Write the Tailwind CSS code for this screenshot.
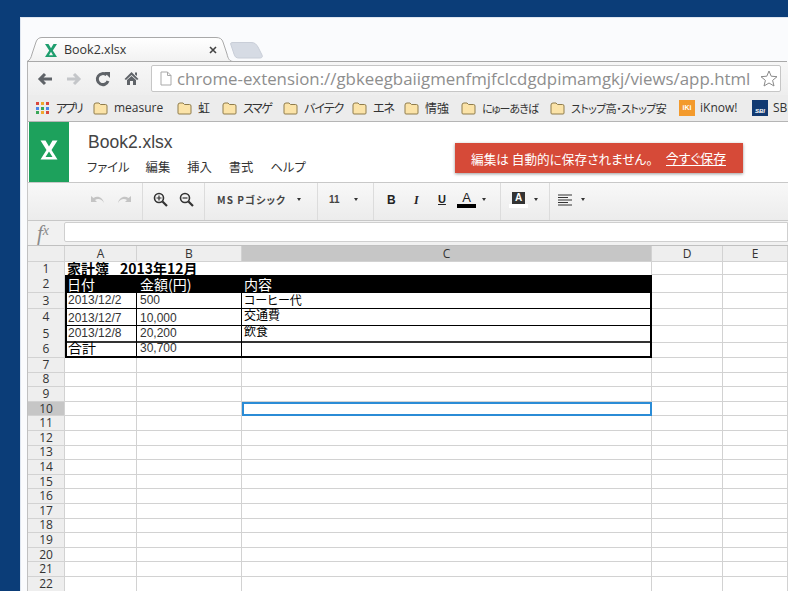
<!DOCTYPE html>
<html lang="ja">
<head>
<meta charset="utf-8">
<title>Book2.xlsx</title>
<script src="https://cdn.jsdelivr.net/npm/@tailwindcss/browser@4"></script>
</head>
<body class="w-[788px] h-[591px] overflow-hidden bg-[#0b3d78] pt-[17px] pl-[20px] font-['Noto_Sans_CJK_JP',sans-serif] [font-feature-settings:'palt']">
<div class="h-[574px] bg-[#fafbfd] pl-[6px] flex flex-col border-l border-t border-[#dfe6f0] overflow-hidden">

  <!-- tab strip -->
  <div class="relative h-[44px] shrink-0">
    <svg class="absolute left-0 top-0" width="760" height="45" viewBox="0 0 760 45">
      <path d="M205 43.5 H760" stroke="#a9a9a9" fill="none"/>
      <path d="M0 43.5 C3 42 4 40 5 36 L9 24 C10 21 12 19.5 15 19.5 H189 C193 19.5 195 21 196 24 L200 36 C201 41 203 43.5 206 43.5 Z" fill="url(#tabfill)" stroke="#a9a9a9"/>
      <path d="M206 24.5 H224 C228 24.5 229 26 231 29 L235 37 C236 39 235 40 232 40 H212 C209 40 208 39 207 36 L204 27 C203 25 204 24.5 206 24.5 Z" fill="#d6dbe4" stroke="#c9ced8"/>
      <defs><linearGradient id="tabfill" x1="0" y1="0" x2="0" y2="1"><stop offset="0" stop-color="#ffffff"/><stop offset="1" stop-color="#f2f2f2"/></linearGradient></defs>
    </svg>
    <div class="absolute left-[17px] top-[22px] w-[173px] h-[20px] flex items-center">
      <svg width="14" height="15" viewBox="0 0 14 15"><path d="M1 1 H4.5 L7 5.2 L9.5 1 H13 L8.8 7.5 L13 14 H1 L5.2 7.5 Z M5 12.2 H9 L7 8.8 Z" fill="#1f9e6e" fill-rule="evenodd"/></svg>
      <span class="ml-[6px] text-[12.5px] text-[#333] font-['Open_Sans',sans-serif]">Book2.xlsx</span>
      <svg class="ml-auto" width="8" height="8" viewBox="0 0 8 8"><path d="M1 1 L7 7 M7 1 L1 7" stroke="#444" stroke-width="1.6"/></svg>
    </div>
  </div>

  <!-- address bar -->
  <div class="h-[33px] shrink-0 border-l border-[#b5b5b5] bg-gradient-to-b from-[#f7f7f7] to-[#eeeeee] flex items-center pl-[9px]">
    <svg width="16" height="14" viewBox="0 0 16 14"><path d="M15 7 H4 M8 2 L3 7 L8 12" stroke="#5f6368" stroke-width="3" fill="none"/></svg>
    <svg class="ml-[13px]" width="16" height="14" viewBox="0 0 16 14"><path d="M1 7 H12 M8 2 L13 7 L8 12" stroke="#c4c6c9" stroke-width="3" fill="none"/></svg>
    <svg class="ml-[13px]" width="16" height="16" viewBox="0 0 16 16"><path d="M13 10 A5.5 5.5 0 1 1 11.5 4" stroke="#5f6368" stroke-width="3" fill="none"/><path d="M9 1 H15 V7 Z" fill="#5f6368"/></svg>
    <svg class="ml-[13px]" width="15" height="15" viewBox="0 0 15 15"><path d="M0.5 8 L7.5 1 L14.5 8 L13 9 L7.5 4 L2 9 Z M3 9 L7.5 5 L12 9 V14 H9 V10 H6 V14 H3 Z M11 1.5 H13 V5 L11 3.5 Z" fill="#5f6368"/></svg>
    <div class="ml-[12px] w-[630px] h-[27px] bg-white border border-[#c6c6c6] rounded-[2px] flex items-center pl-[8px] shrink-0">
      <svg width="12" height="15" viewBox="0 0 12 15"><path d="M1 1 H7.5 L11 4.5 V14 H1 Z M7.5 1 V4.5 H11" stroke="#a9a9a9" fill="#fff"/></svg>
      <span class="ml-[5px] text-[16.85px] text-[#8e8e8e] whitespace-nowrap font-['Open_Sans',sans-serif]">chrome-extension://gbkeegbaiigmenfmjfclcdgdpimamgkj/views/app.html</span>
      <svg class="ml-auto mr-[2px] shrink-0" width="18" height="17" viewBox="0 0 18 17"><path d="M9 1 L11.2 6.2 L17 6.7 L12.6 10.4 L14 16 L9 13 L4 16 L5.4 10.4 L1 6.7 L6.8 6.2 Z" stroke="#8a8a8a" fill="none"/></svg>
    </div>
  </div>

  <!-- bookmarks -->
  <div class="h-[27px] shrink-0 border-l border-b border-[#b5b5b5] bg-[#ececec] flex items-center pl-[8px] text-[12px] text-[#333] whitespace-nowrap">
    <div class="w-[57px] flex items-center gap-[7px] shrink-0">
      <div class="grid grid-cols-3 gap-[1.5px] w-[13px]">
        <i class="size-[3px] bg-[#d9473c]"></i><i class="size-[3px] bg-[#f0a92e]"></i><i class="size-[3px] bg-[#d9473c]"></i>
        <i class="size-[3px] bg-[#4a86e8]"></i><i class="size-[3px] bg-[#3aa757]"></i><i class="size-[3px] bg-[#4a86e8]"></i>
        <i class="size-[3px] bg-[#3aa757]"></i><i class="size-[3px] bg-[#f0a92e]"></i><i class="size-[3px] bg-[#d9473c]"></i>
      </div>
      <span class="tracking-[-2.2px]">アプリ</span>
    </div>
    <div class="w-[84px] flex items-center gap-[6px] shrink-0"><svg width="15" height="13" viewBox="0 0 15 13"><path d="M1 3 Q1 1 3 1 H6 L7.5 2.5 H12.5 Q14 2.5 14 4 V11 Q14 12 13 12 H2 Q1 12 1 11 Z" fill="#fbe3a8" stroke="#8f7c4c"/></svg><span class="font-['Open_Sans',sans-serif]">measure</span></div>
    <div class="w-[45px] flex items-center gap-[6px] shrink-0"><svg width="15" height="13" viewBox="0 0 15 13"><path d="M1 3 Q1 1 3 1 H6 L7.5 2.5 H12.5 Q14 2.5 14 4 V11 Q14 12 13 12 H2 Q1 12 1 11 Z" fill="#fbe3a8" stroke="#8f7c4c"/></svg><span>虹</span></div>
    <div class="w-[61px] flex items-center gap-[6px] shrink-0"><svg width="15" height="13" viewBox="0 0 15 13"><path d="M1 3 Q1 1 3 1 H6 L7.5 2.5 H12.5 Q14 2.5 14 4 V11 Q14 12 13 12 H2 Q1 12 1 11 Z" fill="#fbe3a8" stroke="#8f7c4c"/></svg><span class="tracking-[-1.5px]">スマゲ</span></div>
    <div class="w-[69px] flex items-center gap-[6px] shrink-0"><svg width="15" height="13" viewBox="0 0 15 13"><path d="M1 3 Q1 1 3 1 H6 L7.5 2.5 H12.5 Q14 2.5 14 4 V11 Q14 12 13 12 H2 Q1 12 1 11 Z" fill="#fbe3a8" stroke="#8f7c4c"/></svg><span class="tracking-[-1px]">バイテク</span></div>
    <div class="w-[52px] flex items-center gap-[6px] shrink-0"><svg width="15" height="13" viewBox="0 0 15 13"><path d="M1 3 Q1 1 3 1 H6 L7.5 2.5 H12.5 Q14 2.5 14 4 V11 Q14 12 13 12 H2 Q1 12 1 11 Z" fill="#fbe3a8" stroke="#8f7c4c"/></svg><span class="tracking-[-1px]">エネ</span></div>
    <div class="w-[57px] flex items-center gap-[6px] shrink-0"><svg width="15" height="13" viewBox="0 0 15 13"><path d="M1 3 Q1 1 3 1 H6 L7.5 2.5 H12.5 Q14 2.5 14 4 V11 Q14 12 13 12 H2 Q1 12 1 11 Z" fill="#fbe3a8" stroke="#8f7c4c"/></svg><span>情強</span></div>
    <div class="w-[89px] flex items-center gap-[6px] shrink-0"><svg width="15" height="13" viewBox="0 0 15 13"><path d="M1 3 Q1 1 3 1 H6 L7.5 2.5 H12.5 Q14 2.5 14 4 V11 Q14 12 13 12 H2 Q1 12 1 11 Z" fill="#fbe3a8" stroke="#8f7c4c"/></svg><span class="text-[11px] tracking-[-1px]">にゅーあきば</span></div>
    <div class="w-[129px] flex items-center gap-[6px] shrink-0"><svg width="15" height="13" viewBox="0 0 15 13"><path d="M1 3 Q1 1 3 1 H6 L7.5 2.5 H12.5 Q14 2.5 14 4 V11 Q14 12 13 12 H2 Q1 12 1 11 Z" fill="#fbe3a8" stroke="#8f7c4c"/></svg><span class="text-[11px] tracking-[-0.6px]">ストップ高・ストップ安</span></div>
    <div class="w-[73px] flex items-center gap-[5px] shrink-0"><div class="w-[16px] h-[16px] bg-[#f39a2c] text-white text-[7px] font-bold flex items-center justify-center font-['Liberation_Sans',sans-serif]">iKi</div><span class="font-['Open_Sans',sans-serif]">iKnow!</span></div>
    <div class="flex items-center gap-[5px] shrink-0"><div class="w-[16px] h-[16px] bg-[#123a72] text-white text-[6px] font-bold italic flex items-end justify-center font-['Liberation_Sans',sans-serif]">SBI</div><span class="font-['Open_Sans',sans-serif]">SBI</span></div>
  </div>

  <!-- app header -->
  <div class="h-[60px] shrink-0 bg-white flex pl-[1px] border-l border-[#b5b5b5]">
    <div class="w-[40px] bg-[#1da15c] flex items-center justify-center pb-[4px] pr-[1px] shrink-0">
      <svg width="18" height="20" viewBox="0 0 18 20"><path d="M0.5 0.5 H5.5 L9 6.5 L12.5 0.5 H17.5 L11.5 10 L17.5 19.5 H0.5 L6.5 10 Z M5.5 17 H12.5 L9 11.5 Z" fill="#fff" fill-rule="evenodd"/></svg>
    </div>
    <div class="pl-[19px] pt-[10px] shrink-0">
      <div class="text-[17.5px] leading-[21px] text-[#444] font-['Liberation_Sans',sans-serif]">Book2.xlsx</div>
      <div class="flex gap-[17px] mt-[5px] -ml-[1px] text-[12.3px] leading-[18px] text-[#333]"><span class="-mr-[1px]">ファイル</span><span>編集</span><span>挿入</span><span>書式</span><span>ヘルプ</span></div>
    </div>
    <div class="ml-auto mr-[45px] mt-[21px] w-[288px] h-[30px] bg-[#d64a38] shadow-[0_1px_3px_rgba(0,0,0,0.4)] flex items-center pl-[16px] text-[12.65px] text-white shrink-0">
      <span>編集は 自動的に保存されません。</span><span class="ml-[13px] text-[13px] border-b border-white leading-[15px]">今すぐ保存</span>
    </div>
  </div>

  <!-- toolbar -->
  <div class="h-[39px] shrink-0 flex border-l border-b border-t border-[#c8c8c8] bg-gradient-to-b from-[#f8f8f8] to-[#ececec] text-[#333] *:pb-[4px]">
    <div class="w-[115px] shrink-0 border-r border-[#dcdcdc] flex items-center pl-[62px] gap-[10px]">
      <svg width="16" height="10" viewBox="0 0 16 10"><path d="M1 1 V7 H7 L5 5 C8 3 12 4 14 8 C13 3 8 0 3.5 3 Z" fill="#c4c4c4"/></svg>
      <svg width="16" height="10" viewBox="0 0 16 10"><path d="M15 1 V7 H9 L11 5 C8 3 4 4 2 8 C3 3 8 0 12.5 3 Z" fill="#c4c4c4"/></svg>
    </div>
    <div class="w-[62px] shrink-0 border-r border-[#dcdcdc] flex items-center pl-[10px] gap-[11px]">
      <svg width="15" height="15" viewBox="0 0 15 15"><circle cx="6" cy="6" r="4.5" stroke="#333" stroke-width="1.6" fill="none"/><path d="M9.5 9.5 L14 14" stroke="#333" stroke-width="2.2"/><path d="M3.5 6 H8.5 M6 3.5 V8.5" stroke="#333" stroke-width="1.2"/></svg>
      <svg width="15" height="15" viewBox="0 0 15 15"><circle cx="6" cy="6" r="4.5" stroke="#333" stroke-width="1.6" fill="none"/><path d="M9.5 9.5 L14 14" stroke="#333" stroke-width="2.2"/><path d="M3.5 6 H8.5" stroke="#333" stroke-width="1.2"/></svg>
    </div>
    <div class="w-[113px] shrink-0 border-r border-[#dcdcdc] flex items-center pl-[12px] text-[10px] font-bold tracking-[1.1px] text-[#444] whitespace-nowrap">
      <span>MS Pゴシック</span>
      <i class="ml-[11px] border-x-[2.5px] border-t-[3px] border-x-transparent border-t-[#333]"></i>
    </div>
    <div class="w-[56px] shrink-0 border-r border-[#dcdcdc] flex items-center pl-[11px] text-[10px] font-bold text-[#444] font-['Liberation_Sans',sans-serif]">
      <span>11</span>
      <i class="ml-[14px] border-x-[2.5px] border-t-[3px] border-x-transparent border-t-[#333]"></i>
    </div>
    <div class="w-[127px] shrink-0 border-r border-[#dcdcdc] flex items-center pl-[13px] text-[#222] font-['Liberation_Sans',sans-serif]">
      <span class="w-[27px] text-[12px] font-black">B</span>
      <span class="w-[24px] text-[12px] font-bold italic font-['Liberation_Serif',serif]">I</span>
      <span class="w-[19px] text-[11px] font-bold underline">U</span>
      <span class="w-[19px] text-[13px] leading-[13px] border-b-[4px] border-black text-center">A</span>
      <i class="ml-[6px] border-x-[2.5px] border-t-[3px] border-x-transparent border-t-[#333]"></i>
    </div>
    <div class="w-[49px] shrink-0 border-r border-[#dcdcdc] flex items-center pl-[8px]">
      <span class="w-[19px] flex flex-col items-center">
        <span class="w-[13px] h-[12px] bg-[#333] text-white text-[10px] leading-[12px] font-bold text-center font-['Liberation_Sans',sans-serif]">A</span>
        <span class="w-[19px] h-[4px] bg-white"></span>
      </span>
      <i class="ml-[6px] border-x-[2.5px] border-t-[3px] border-x-transparent border-t-[#333]"></i>
    </div>
    <div class="flex-1 flex items-center pl-[8px]">
      <svg width="14" height="12" viewBox="0 0 14 12"><path d="M0 1 H14 M0 3.5 H10 M0 6 H14 M0 8.5 H10 M0 11 H14" stroke="#333"/></svg>
      <i class="ml-[9px] border-x-[2.5px] border-t-[3px] border-x-transparent border-t-[#333]"></i>
    </div>
  </div>

  <!-- formula bar -->
  <div class="h-[24px] shrink-0 border-l border-[#c8c8c8] bg-[#f1f1f1] flex items-start">
    <div class="w-[36px] shrink-0 pl-[9px] text-[21px] leading-[24px] italic text-[#8a8a8a] font-['Liberation_Serif',serif]">f<span class="relative -top-[5px] text-[14px]">x</span></div>
    <div class="flex-1 h-[20px] mt-[1px] bg-white border border-[#cfcfcf] rounded-l-[2px]"></div>
  </div>

  <!-- sheet -->
  <div class="border-l border-t border-[#c0c0c0] bg-white text-[12px] leading-none whitespace-nowrap">
    <div class="h-[16px] grid grid-cols-[37px_72px_105px_410px_71px_65px] bg-[#eeeeee] text-[#333] font-['Open_Sans',sans-serif] *:flex *:items-center *:justify-center *:border-r *:border-b *:border-[#d2d2d2]">
      <div></div><div>A</div><div>B</div><div class="bg-[#c6c6c6]">C</div><div>D</div><div>E</div>
    </div>
    <div class="h-[13px] grid grid-cols-[37px_72px_105px_410px_71px_65px] *:border-r *:border-[#d2d2d2]">
      <div class="bg-[#eeeeee] flex items-center justify-center text-[#333] font-['Open_Sans',sans-serif]">1</div><div class="pl-[2px] font-bold text-[14px] leading-[13px] text-black border-r-0!">家計簿<span class="ml-[11px]">2013年12月</span></div><div class="border-r-0!"></div><div></div><div class="border-b"></div><div class="border-b"></div>
    </div>
    <div class="h-[18px] grid grid-cols-[37px_72px_105px_410px_71px_65px] *:border-r *:border-[#d2d2d2]">
      <div class="bg-[#eeeeee] border-b flex items-center justify-center text-[#333] font-['Open_Sans',sans-serif]">2</div><div class="bg-black text-white text-[14px] pl-[2px] flex items-center border-r-0!">日付</div><div class="bg-black text-white text-[14px] pl-[3px] flex items-center border-r-0!">金額(円)</div><div class="bg-black text-white text-[14px] pl-[2px] flex items-center border-r-0!">内容</div><div class="border-b"></div><div class="border-b"></div>
    </div>
    <div class="h-[16px] grid grid-cols-[37px_72px_105px_410px_71px_65px] *:border-r *:border-b *:border-[#d2d2d2]">
      <div class="bg-[#eeeeee] flex items-center justify-center text-[#333] font-['Open_Sans',sans-serif]">3</div><div class="border-l-2 border-l-black! border-r-black! border-b-black! pl-[1px] pb-[2px] flex items-center text-[#333] font-['Liberation_Sans',sans-serif]">2013/12/2</div><div class="border-r-black! border-b-black! pl-[3px] pb-[2px] flex items-center text-[#333] font-['Liberation_Sans',sans-serif]">500</div><div class="border-r-2! border-r-black! border-b-black! pl-[2px] pb-[2px] flex items-center text-black">コーヒー代</div><div></div><div></div>
    </div>
    <div class="h-[16px] grid grid-cols-[37px_72px_105px_410px_71px_65px] *:border-r *:border-b *:border-[#d2d2d2]">
      <div class="bg-[#eeeeee] flex items-center justify-center text-[#333] font-['Open_Sans',sans-serif]">4</div><div class="border-l-2 border-l-black! border-r-black! border-b-black! pl-[1px] pt-[2px] flex items-center text-[#333] font-['Liberation_Sans',sans-serif]">2013/12/7</div><div class="border-r-black! border-b-black! pl-[3px] pt-[2px] flex items-center text-[#333] font-['Liberation_Sans',sans-serif]">10,000</div><div class="border-r-2! border-r-black! border-b-black! pl-[2px] pb-[4px] flex items-center text-black">交通費</div><div></div><div></div>
    </div>
    <div class="h-[15px] grid grid-cols-[37px_72px_105px_410px_71px_65px] *:border-r *:border-b *:border-[#d2d2d2]">
      <div class="bg-[#eeeeee] flex items-center justify-center text-[#333] font-['Open_Sans',sans-serif]">5</div><div class="border-l-2 border-l-black! border-r-black! border-b-2! border-b-[#333]! pl-[1px] flex items-center text-[#333] font-['Liberation_Sans',sans-serif]">2013/12/8</div><div class="border-r-black! border-b-2! border-b-[#333]! pl-[3px] flex items-center text-[#333] font-['Liberation_Sans',sans-serif]">20,200</div><div class="border-r-2! border-r-black! border-b-2! border-b-[#333]! pl-[2px] pb-[4px] flex items-center text-black">飲食</div><div></div><div></div>
    </div>
    <div class="h-[18px] grid grid-cols-[37px_72px_105px_410px_71px_65px] *:border-r *:border-b *:border-[#d2d2d2]">
      <div class="bg-[#eeeeee] flex items-center justify-center text-[#333] font-['Open_Sans',sans-serif]">6</div><div class="border-l-2 border-l-black! border-r-black! border-b-2! border-b-black! pl-[1px] pb-[2px] flex items-center text-[14px] text-black">合計</div><div class="border-r-black! border-b-2! border-b-black! pl-[3px] flex items-center text-[#333] font-['Liberation_Sans',sans-serif]">30,700</div><div class="border-r-2! border-r-black! border-b-2! border-b-black!"></div><div></div><div></div>
    </div>
    <div class="font-['Open_Sans',sans-serif] text-[#333] *:h-[14.6px] *:grid *:grid-cols-[37px_72px_105px_410px_71px_65px] [&>div>div]:border-r [&>div>div]:border-b [&>div>div]:border-[#d2d2d2] [&>div>div:first-child]:bg-[#eeeeee] [&>div>div:first-child]:flex [&>div>div:first-child]:items-center [&>div>div:first-child]:justify-center">
      <div><div>7</div><div></div><div></div><div></div><div></div><div></div></div>
      <div><div>8</div><div></div><div></div><div></div><div></div><div></div></div>
      <div><div>9</div><div></div><div></div><div></div><div></div><div></div></div>
      <div><div class="bg-[#c6c6c6]!">10</div><div></div><div></div><div class="border-2! border-[#2b8cd6]!"></div><div></div><div></div></div>
      <div><div>11</div><div></div><div></div><div></div><div></div><div></div></div>
      <div><div>12</div><div></div><div></div><div></div><div></div><div></div></div>
      <div><div>13</div><div></div><div></div><div></div><div></div><div></div></div>
      <div><div>14</div><div></div><div></div><div></div><div></div><div></div></div>
      <div><div>15</div><div></div><div></div><div></div><div></div><div></div></div>
      <div><div>16</div><div></div><div></div><div></div><div></div><div></div></div>
      <div><div>17</div><div></div><div></div><div></div><div></div><div></div></div>
      <div><div>18</div><div></div><div></div><div></div><div></div><div></div></div>
      <div><div>19</div><div></div><div></div><div></div><div></div><div></div></div>
      <div><div>20</div><div></div><div></div><div></div><div></div><div></div></div>
      <div><div>21</div><div></div><div></div><div></div><div></div><div></div></div>
      <div><div>22</div><div></div><div></div><div></div><div></div><div></div></div>
    </div>
  </div>
</div>
</body>
</html>
